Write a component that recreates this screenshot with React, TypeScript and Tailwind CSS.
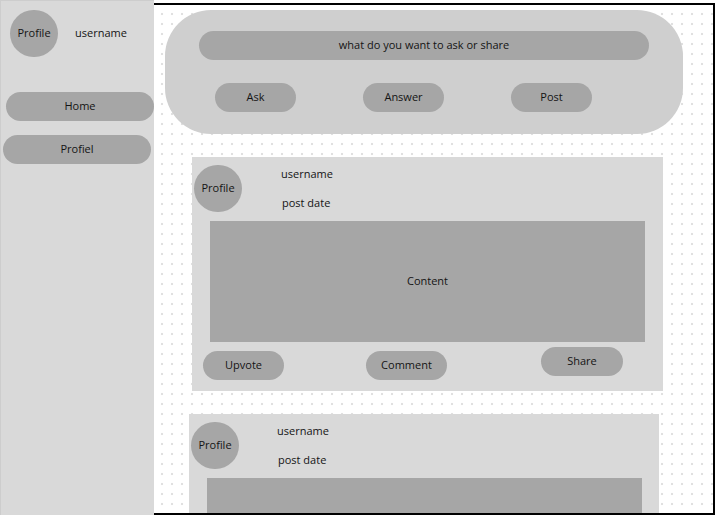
import React from "react";

const font = { fontFamily: "'Open Sans', 'Noto Sans', sans-serif" };

function Pill({ label, className = "" }: { label: string; className?: string }) {
  return (
    <div
      className={`h-[29px] rounded-full bg-[#a6a6a6] flex items-center justify-center text-[11px] text-[#141414] shrink-0 ${className}`}
    >
      {label}
    </div>
  );
}

function Avatar({ className = "" }: { className?: string }) {
  return (
    <div
      className={`w-[48px] h-[47px] rounded-full bg-[#a6a6a6] flex items-center justify-center text-[11px] text-[#141414] shrink-0 ${className}`}
    >
      Profile
    </div>
  );
}

function PostCard({
  className = "",
  textGap = "ml-[39px]",
  folded = false,
}: {
  className?: string;
  textGap?: string;
  folded?: boolean;
}) {
  return (
    <div className={`bg-[#d9d9d9] flex flex-col shrink-0 ${className}`}>
      {/* header */}
      <div className="h-[64px] flex items-start">
        <Avatar className="mt-[8px] ml-[2px]" />
        <div className={`flex flex-col text-[11px] text-[#141414] leading-[16px] ${textGap}`}>
          <span className="mt-[9px]">username</span>
          <span className="mt-[13px] ml-[1px]">post date</span>
        </div>
      </div>

      {/* content — the second card runs off the bottom of the feed */}
      <div className="ml-[18px] w-[435px] h-[121px] bg-[#a6a6a6] flex items-center justify-center text-[11px] text-[#141414]">
        {!folded && "Content"}
      </div>

      {!folded && (
        <div className="flex items-start mt-[5px] pl-[11px]">
          <Pill label="Upvote" className="w-[81px] mt-[4px]" />
          <Pill label="Comment" className="w-[81px] mt-[4px] ml-[82px]" />
          <Pill label="Share" className="w-[82px] ml-[94px]" />
        </div>
      )}
    </div>
  );
}

export default function App() {
  return (
    <div className="w-[723px] h-[515px] bg-white flex overflow-hidden" style={font}>
      {/* Sidebar */}
      <aside className="w-[154px] h-full bg-[#d9d9d9] border-t border-l border-[#cdcdcd] flex flex-col shrink-0">
        <div className="flex items-center mt-[9px]">
          <Avatar className="ml-[9px]" />
          <span className="ml-[17px] text-[11px] text-[#141414]">username</span>
        </div>
        <Pill label="Home" className="ml-[5px] w-[148px] mt-[35px]" />
        <Pill label="Profiel" className="ml-[2px] w-[148px] mt-[14px]" />
      </aside>

      {/* Main feed */}
      <main className="w-[561px] h-[512px] mt-[3px] border-t-2 border-r-2 border-b-2 border-black overflow-hidden shrink-0 bg-white bg-[radial-gradient(circle,#e0e0e0_1px,transparent_1.6px)] bg-[size:10px_10px] bg-[position:3px_4px]">
        <div className="flex flex-col">
          {/* Composer */}
          <div className="ml-[11px] mt-[5px] w-[518px] h-[124px] rounded-[46px] bg-[#cfcfcf] flex flex-col">
            <div className="ml-[34px] mt-[21px] w-[450px] h-[29px] rounded-full bg-[#a6a6a6] flex items-center justify-center text-[11px] text-[#141414]">
              what do you want to ask or share
            </div>
            <div className="flex pl-[50px] mt-[23px] gap-[67px]">
              <Pill label="Ask" className="w-[81px] h-[28px]" />
              <Pill label="Answer" className="w-[81px] h-[28px]" />
              <Pill label="Post" className="w-[81px] h-[28px]" />
            </div>
          </div>

          <PostCard className="ml-[38px] mt-[23px] w-[471px] h-[234px]" />
          <PostCard className="ml-[35px] mt-[23px] w-[470px] h-[234px]" textGap="ml-[38px]" folded />
        </div>
      </main>
    </div>
  );
}
